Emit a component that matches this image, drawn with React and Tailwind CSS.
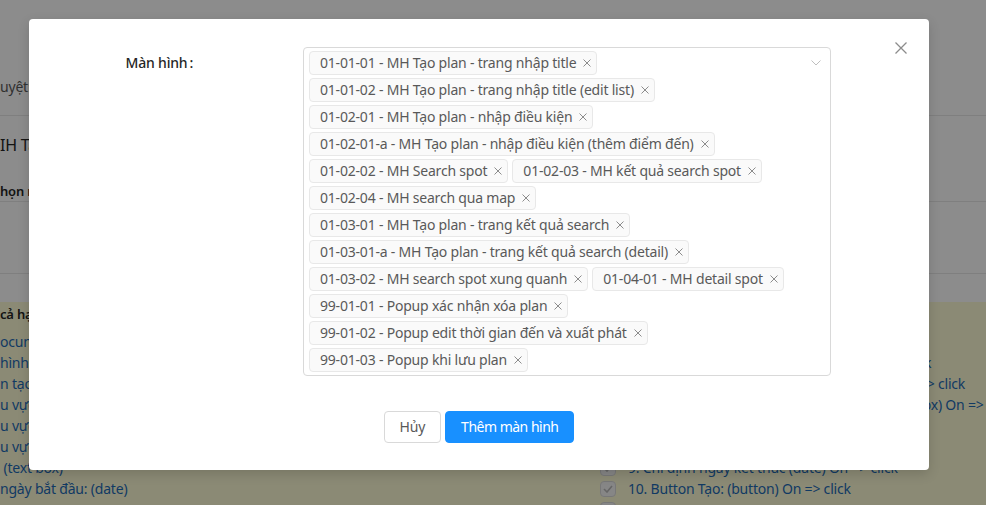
import React from "react";

const tags = [
  "01-01-01 - MH Tạo plan - trang nhập title",
  "01-01-02 - MH Tạo plan - trang nhập title (edit list)",
  "01-02-01 - MH Tạo plan - nhập điều kiện",
  "01-02-01-a - MH Tạo plan - nhập điều kiện (thêm điểm đến)",
  "01-02-02 - MH Search spot",
  "01-02-03 - MH kết quả search spot",
  "01-02-04 - MH search qua map",
  "01-03-01 - MH Tạo plan - trang kết quả search",
  "01-03-01-a - MH Tạo plan - trang kết quả search (detail)",
  "01-03-02 - MH search spot xung quanh",
  "01-04-01 - MH detail spot",
  "99-01-01 - Popup xác nhận xóa plan",
  "99-01-02 - Popup edit thời gian đến và xuất phát",
  "99-01-03 - Popup khi lưu plan",
];

function Tag({ label }) {
  return (
    <span className="relative mr-1 mt-[3px] inline-flex h-6 items-center whitespace-nowrap rounded-sm border border-[#e8e8e8] bg-[#fafafa] pl-[10px] pr-5 text-sm leading-[22px] text-[#595959]">
      {label}
      <svg
        className="absolute right-[5px] top-1/2 -translate-y-1/2"
        width="8"
        height="8"
        viewBox="0 0 8 8"
      >
        <path d="M0.5 0.5L7.5 7.5M7.5 0.5L0.5 7.5" stroke="#8c8c8c" strokeWidth="1" />
      </svg>
    </span>
  );
}

function Check() {
  return (
    <span className="inline-flex h-4 w-4 shrink-0 items-center justify-center rounded-sm border border-[#d9d9d9] bg-[#f5f5f5]">
      <svg width="10" height="8" viewBox="0 0 10 8">
        <path d="M1 4L4 7L9 1" fill="none" stroke="#b8b8b8" strokeWidth="1.6" />
      </svg>
    </span>
  );
}

const leftRows = [
  "ocument: (link) On => click",
  "hình: (link) On => click",
  "n tạo plan",
  "u vực nhập title",
  "u vực nhập điều kiện",
  "u vực nhập điểm đến",
  "\u00a0(text box)",
  "ngày bắt đầu: (date)",
];

const rightRows = [
  "1. Document: (link) On => click",
  "2. Màn hình danh sách: (combo box) On => click",
  "3. Button tạo plan mới của users: (button) On => click",
  "4. Khu vực nhập điều kiện tìm kiếm: (ô check box) On => click",
  "5. Khu vực nhập điểm đến",
  "6. Khu vực nhập title",
  "9. Chỉ định ngày kết thúc (date) On => click",
  "10. Button Tạo: (button) On => click",
  "",
];

export default function App() {
  return (
    <div className="relative h-[505px] w-[986px] overflow-hidden bg-white text-sm tracking-[-0.2px] font-['Noto_Sans',sans-serif]">
      {/* Background page */}
      <div className="h-[116px] border-b border-[#e8e8e8] pt-[76px]">
        <div className="leading-[22px] text-[#595959]">uyệt:</div>
      </div>
      <div className="h-[86px] border-b border-[#e8e8e8] pt-[17px]">
        <div className="text-base leading-6 text-[#262626]">IH Tạo plan</div>
        <div className="mt-[24px] text-[13px] font-semibold leading-5 text-[#262626]">họn màn hình</div>
      </div>
      <div className="h-[72px] border-b border-[#e8e8e8]" />
      <div className="h-[28px]" />
      <div className="h-[240px] bg-[#fdfbd6] pt-[1px]">
        <div className="text-[13px] font-semibold leading-[22px] text-[#262626]">cả hạng mục</div>
        <div className="mt-[6px] flex">
          <div className="w-[600px] shrink-0 overflow-hidden">
            {leftRows.map((r, i) => (
              <div key={i} className="h-[21px] whitespace-nowrap leading-[21px] text-[#1f6bb5]">
                {r}
              </div>
            ))}
          </div>
          <div className="min-w-0 flex-1">
            {rightRows.map((r, i) => (
              <div key={i} className="flex h-[21px] items-center gap-3 whitespace-nowrap leading-[21px] text-[#1f6bb5]">
                <Check />
                {r && <span>{r}</span>}
              </div>
            ))}
          </div>
        </div>
      </div>

      {/* Overlay */}
      <div className="absolute inset-0 bg-black/45" />

      {/* Modal */}
      <div className="absolute left-[29px] top-[19px] h-[451px] w-[900px] rounded bg-white shadow-[0_4px_12px_rgba(0,0,0,0.15)]">
        <button className="absolute right-[22px] top-[23px]">
          <svg width="12" height="12" viewBox="0 0 12 12">
            <path d="M0.5 0.5L11.5 11.5M11.5 0.5L0.5 11.5" stroke="#8c8c8c" strokeWidth="1.3" />
          </svg>
        </button>

        <div className="flex pt-[28px]">
          <div className="w-[172px] pr-2 pt-[5px] text-right text-sm font-medium leading-[22px] text-[#262626]">
            Màn hình<span className="ml-[2px]">:</span>
          </div>
          <div className="relative ml-[102px] flex w-[528px] flex-wrap rounded border border-[#d9d9d9] bg-white pb-[3px] pl-[5px] pr-[24px]">
            {tags.map((t) => (
              <Tag key={t} label={t} />
            ))}
            <svg
              className="absolute right-[9px] top-[12px]"
              width="10"
              height="6"
              viewBox="0 0 10 6"
            >
              <path d="M0.5 0.5L5 5L9.5 0.5" fill="none" stroke="#bfbfbf" strokeWidth="1" />
            </svg>
          </div>
        </div>

        <div className="mt-[35px] flex justify-center gap-1">
          <button className="h-8 rounded border border-[#d9d9d9] bg-white px-[15px] text-sm text-[#595959]">
            Hủy
          </button>
          <button className="h-8 rounded border border-[#1890ff] bg-[#1890ff] px-[15px] text-sm tracking-[-0.5px] text-white">
            Thêm màn hình
          </button>
        </div>
      </div>
    </div>
  );
}
